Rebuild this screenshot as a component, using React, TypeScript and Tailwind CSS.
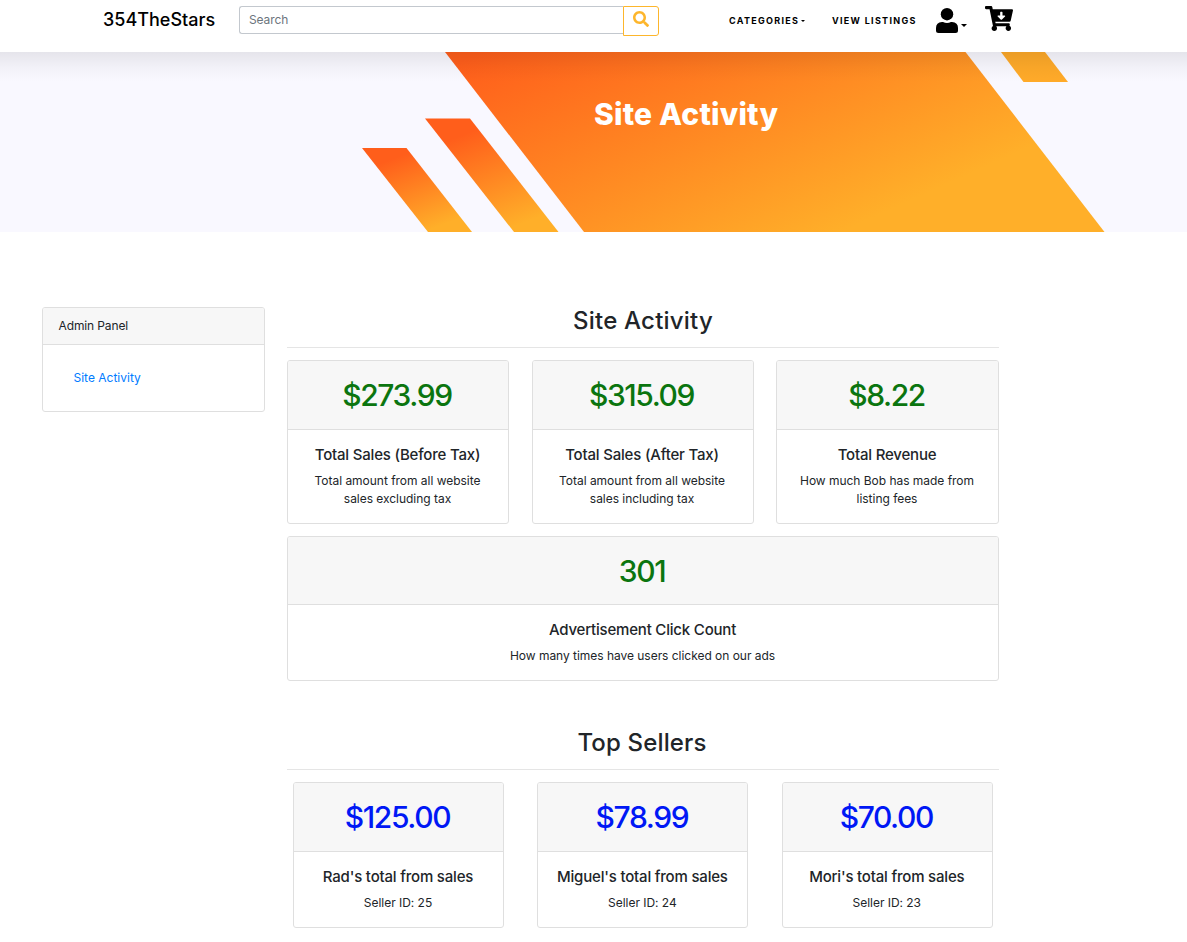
import { FaSearch, FaCartArrowDown } from "react-icons/fa";

type Stat = { value: string; title: string; lines: string[] };

const totals: Stat[] = [
  { value: "$273.99", title: "Total Sales (Before Tax)", lines: ["Total amount from all website", "sales excluding tax"] },
  { value: "$315.09", title: "Total Sales (After Tax)", lines: ["Total amount from all website", "sales including tax"] },
  { value: "$8.22", title: "Total Revenue", lines: ["How much Bob has made from", "listing fees"] },
];

const adClicks: Stat = {
  value: "301",
  title: "Advertisement Click Count",
  lines: ["How many times have users clicked on our ads"],
};

const sellers: Stat[] = [
  { value: "$125.00", title: "Rad's total from sales", lines: ["Seller ID: 25"] },
  { value: "$78.99", title: "Miguel's total from sales", lines: ["Seller ID: 24"] },
  { value: "$70.00", title: "Mori's total from sales", lines: ["Seller ID: 23"] },
];

function Card({ stat, color, headClass = "h-[69px]" }: { stat: Stat; color: string; headClass?: string }) {
  return (
    <div className="rounded-[3px] border border-[#dfdfdf] bg-white text-center">
      <div className={`flex items-center justify-center rounded-t-[2px] border-b border-[#dfdfdf] bg-[#f7f7f7] pr-[2px] ${headClass}`}>
        <span className={`text-[30px] leading-[36px] font-medium tracking-[-1.4px] ${color}`}>{stat.value}</span>
      </div>
      <div className="py-[15px] pr-px">
        <h5 className="text-[15px] leading-[20px] font-medium tracking-[-0.19px] whitespace-nowrap">{stat.title}</h5>
        <p className="mt-[7px] text-[12px] leading-[18px] tracking-[-0.03px]">
          {stat.lines.map((line) => (
            <span key={line} className="block whitespace-nowrap">{line}</span>
          ))}
        </p>
      </div>
    </div>
  );
}

function Caret({ className }: { className: string }) {
  return <span className={`inline-block h-0 w-0 border-x-transparent border-t-black ${className}`} />;
}

function Hero() {
  return (
    <section className="relative h-[180px] overflow-hidden bg-[#f9f8ff]">
      <svg className="absolute inset-0" width="1187" height="180" viewBox="0 52 1187 180">
        <defs>
          <linearGradient id="main" gradientUnits="userSpaceOnUse" x1="460" y1="62" x2="588" y2="346">
            <stop offset="0" stopColor="#ff5e1b" />
            <stop offset="1" stopColor="#ffaf29" />
          </linearGradient>
          <linearGradient id="mid" gradientUnits="userSpaceOnUse" x1="455" y1="138" x2="492" y2="235">
            <stop offset="0" stopColor="#ff5e1b" />
            <stop offset="1" stopColor="#ffaf29" />
          </linearGradient>
          <linearGradient id="low" gradientUnits="userSpaceOnUse" x1="390" y1="160" x2="418" y2="234">
            <stop offset="0" stopColor="#ff5e1b" />
            <stop offset="1" stopColor="#ffaf29" />
          </linearGradient>
        </defs>
        <polygon points="445,52 965.500,52 1104.500,232 584,232" fill="url(#main)" />
        <polygon points="425,118.500 470,118.500 558.500,232 514,232" fill="url(#mid)" />
        <polygon points="362,148 406.500,148 472,232 428,232" fill="url(#low)" />
        <polygon points="1001,52 1045,52 1068,82 1023.500,82" fill="#ffaa29" />
      </svg>
      <div className="absolute inset-x-0 top-0 h-[30px] bg-linear-to-b from-black/8 via-black/3 to-transparent" />
      <h1 className="relative pt-[44px] pl-[594px] text-[30px] leading-[36px] font-extrabold tracking-[0.2px] whitespace-nowrap text-white">Site Activity</h1>
    </section>
  );
}

export default function App() {
  return (
    <div className="h-[942px] w-[1187px] overflow-hidden bg-white font-['Inter',sans-serif] text-[#212529]">
      <header className="flex h-[52px] items-start text-black">
        <a className="ml-[103px] w-[136px] pt-[6px] text-[18px] leading-[27px] font-medium">354TheStars</a>
        <div className="mt-[6px] flex items-start">
          <input placeholder="Search" className="h-[28px] w-[384px] rounded-l-[3px] border border-r-0 border-[#c3c8ce] pb-[2px] pl-[9px] text-[12px] tracking-[-0.1px] placeholder:text-[#6c757d]" />
          <button className="flex h-[30px] w-[36px] items-start justify-center rounded-r-[3px] border border-[#fdb62c] pt-[4px] text-[#fdb62c]">
            <FaSearch size={16} />
          </button>
        </div>
        <nav className="flex items-start text-[9px] leading-[12px] font-bold tracking-[1.3px]">
          <a className="ml-[70px] flex w-[103px] items-center pt-[15px]">
            CATEGORIES
            <Caret className="ml-[2px] border-x-[2.5px] border-t-[2.5px]" />
          </a>
          <a className="w-[104px] pt-[15px] whitespace-nowrap">VIEW LISTINGS</a>
          <a className="flex w-[49px] items-start pt-[8px]">
            <svg width="22" height="25" viewBox="0 0 22 25">
              <circle cx="11" cy="6.200" r="6.200" />
              <path d="M6 14H7Q11 15.800 15 14H16Q22 14.300 22 20V22.500Q22 25 19.500 25H2.500Q0 25 0 22.500V20Q0 14.300 6 14Z" />
            </svg>
            <Caret className="mt-[16px] ml-[3px] border-x-[3px] border-t-[3px]" />
          </a>
          <a className="pt-[6px]">
            <FaCartArrowDown className="h-[25px] w-[28px]" preserveAspectRatio="none" />
          </a>
        </nav>
      </header>
      <Hero />
      <div className="flex items-start">
        <aside className="mt-[75px] ml-[42px] h-[105px] w-[223px] shrink-0 rounded-[3px] border border-[#dfdfdf]">
          <div className="h-[37px] rounded-t-[2px] border-b border-[#dfdfdf] bg-[#f7f7f7] pt-[9px] pl-[15.500px] text-[12px] leading-[18px] tracking-[-0.12px]">Admin Panel</div>
          <a className="mt-[24px] ml-[30.500px] block text-[12px] leading-[18px] text-[#007bff]">Site Activity</a>
        </aside>
        <main className="ml-[22px] w-[712px] pt-[74px]">
          <h2 className="h-[42px] border-b border-[#e5e5e5] text-center text-[24px] leading-[30px] font-medium tracking-[0.2px]">Site Activity</h2>
          <div className="mt-[12px] grid grid-cols-[222px_222px_223px] gap-x-[22.500px]">
            {totals.map((s) => (
              <Card key={s.title} stat={s} color="text-[#0b750f]" />
            ))}
          </div>
          <div className="mt-[12px]">
            <Card stat={adClicks} color="text-[#0b750f]" headClass="h-[68px]" />
          </div>
          <h2 className="mt-[47px] h-[42px] border-b border-[#e5e5e5] pr-[2px] text-center text-[24px] leading-[30px] font-medium tracking-[0.15px]">Top Sellers</h2>
          <div className="mt-[12px] grid grid-cols-[211px_211px_211px] gap-x-[33.400px] pl-[6px]">
            {sellers.map((s) => (
              <Card key={s.title} stat={s} color="text-[#0018f5]" />
            ))}
          </div>
        </main>
      </div>
    </div>
  );
}
